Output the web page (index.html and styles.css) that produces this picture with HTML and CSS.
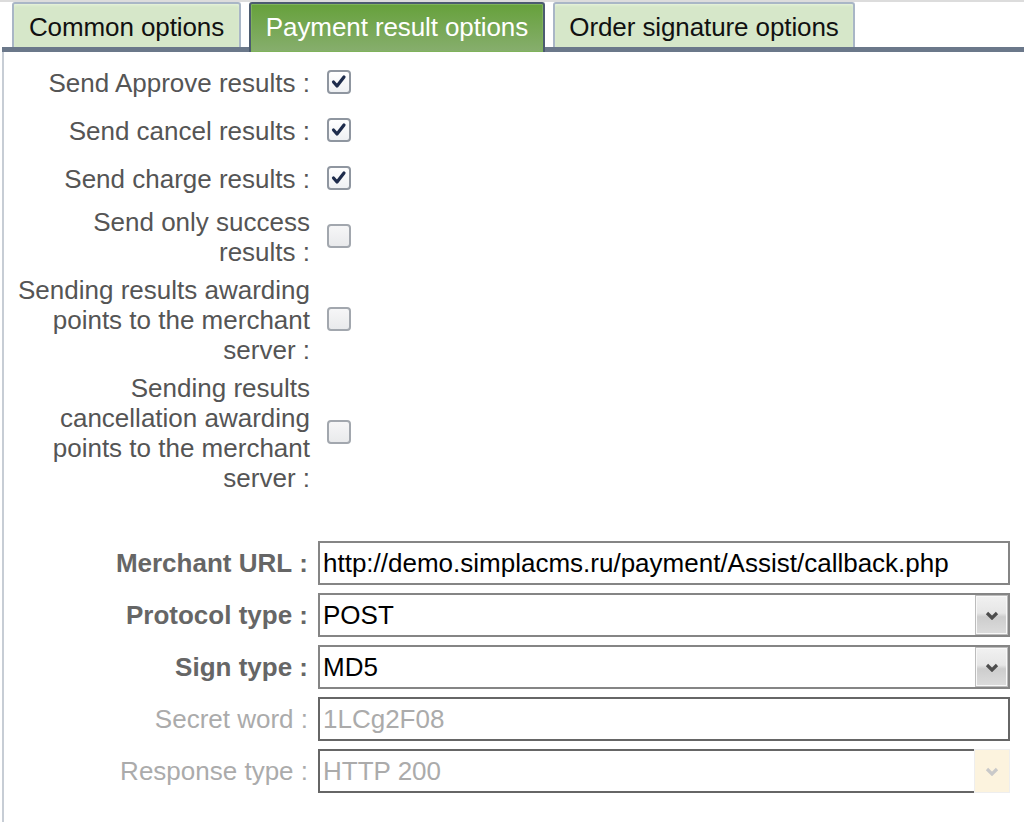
FILE: index.html
```html
<!DOCTYPE html>
<html>
<head>
<meta charset="utf-8">
<link rel="stylesheet" href="styles.css">
</head>
<body>
<div class="topline"></div>
<div class="panel">
  <div class="tabs">
    <div class="tab t-common">Common options</div>
    <div class="tab t-payment active">Payment result options</div>
    <div class="tab t-order">Order signature options</div>
  </div>
  <div class="content">
    <div class="checks">
      <div class="lbl">Send Approve results&nbsp;:</div>
      <span class="cb checked"><svg width="20" height="20" viewBox="0 0 20 20"><polyline points="4.5,10 8,14 15,5" fill="none" stroke="#1e2c4c" stroke-width="3.2" stroke-linecap="round" stroke-linejoin="round"/></svg></span>

      <div class="lbl">Send cancel results&nbsp;:</div>
      <span class="cb checked"><svg width="20" height="20" viewBox="0 0 20 20"><polyline points="4.5,10 8,14 15,5" fill="none" stroke="#1e2c4c" stroke-width="3.2" stroke-linecap="round" stroke-linejoin="round"/></svg></span>

      <div class="lbl">Send charge results&nbsp;:</div>
      <span class="cb checked"><svg width="20" height="20" viewBox="0 0 20 20"><polyline points="4.5,10 8,14 15,5" fill="none" stroke="#1e2c4c" stroke-width="3.2" stroke-linecap="round" stroke-linejoin="round"/></svg></span>

      <div class="lbl">Send only success results&nbsp;:</div>
      <span class="cb"></span>

      <div class="lbl">Sending results awarding points to the merchant server&nbsp;:</div>
      <span class="cb"></span>

      <div class="lbl">Sending results cancellation awarding points to the merchant server&nbsp;:</div>
      <span class="cb"></span>
    </div>

    <div class="fields">
      <div class="flbl bold">Merchant URL&nbsp;:</div>
      <div class="box"><span class="val">http://demo.simplacms.ru/payment/Assist/callback.php</span></div>

      <div class="flbl bold">Protocol type&nbsp;:</div>
      <div class="box select"><span class="val">POST</span><span class="arrow"><svg width="14" height="9" viewBox="0 0 14 9"><polyline points="2,2 7,7 12,2" fill="none" stroke="#4d4d4d" stroke-width="3.2"/></svg></span></div>

      <div class="flbl bold">Sign type&nbsp;:</div>
      <div class="box select"><span class="val">MD5</span><span class="arrow"><svg width="14" height="9" viewBox="0 0 14 9"><polyline points="2,2 7,7 12,2" fill="none" stroke="#4d4d4d" stroke-width="3.2"/></svg></span></div>

      <div class="flbl dis">Secret word&nbsp;:</div>
      <div class="box disabled"><span class="val">1LCg2F08</span></div>

      <div class="flbl dis">Response type&nbsp;:</div>
      <div class="box select disabled"><span class="val">HTTP 200</span><span class="arrow"><svg width="14" height="9" viewBox="0 0 14 9"><polyline points="2,2 7,7 12,2" fill="none" stroke="#c9c9c9" stroke-width="3.2"/></svg></span></div>
    </div>
  </div>
</div>
</body>
</html>
```

FILE: styles.css
```css
html, body {
  margin: 0;
  padding: 0;
  background: #fff;
}
body {
  font-family: "Liberation Sans", Arial, sans-serif;
  font-size: 26px;
  line-height: 30px;
  width: 1024px;
  height: 822px;
  overflow: hidden;
}
.topline {
  height: 2px;
  background: #dcdcdc;
}
.panel {
  margin-left: 2px;
}
.tabs {
  display: flex;
  align-items: flex-start;
  gap: 8px;
  height: 45px;
  padding-left: 10px;
  border-bottom: 5px solid #6b788a;
}
.tab {
  flex: none;
  box-sizing: border-box;
  padding: 8px 0 5px;
  border: 2px solid #a9b6c6;
  border-bottom: none;
  border-radius: 3px 3px 0 0;
  background: #d6e7c9;
  box-shadow: inset 0 2px 3px -1px #e9f4de;
  color: #111;
  text-align: center;
  white-space: nowrap;
  letter-spacing: -0.1px;
}
.t-common { width: 229px; }
.t-payment { width: 296px; }
.t-order { width: 302px; }
.tab.active {
  padding-bottom: 10px;
  border-color: #4c5b70;
  background: linear-gradient(#66a13b, #87ae6e);
  box-shadow: inset 0 0 0 1px #7fb35b;
  color: #fff;
}
.content {
  border-left: 2px solid #c7cdd5;
  height: 770px;
  padding-top: 6px;
  box-sizing: border-box;
}
.checks {
  display: grid;
  grid-template-columns: 296px 24px;
  column-gap: 17px;
  margin-left: 10px;
  align-items: center;
}
.lbl {
  padding: 5px 0 3px;
  text-align: right;
  color: #555;
}
.cb {
  display: flex;
  align-items: center;
  justify-content: center;
  width: 24px;
  height: 24px;
  box-sizing: border-box;
  margin: 12px 0;
  border: 2px solid #a2a7ae;
  border-radius: 4px;
  background: linear-gradient(#f6f6f7, #e9eaec);
}
.cb.checked {
  border-color: #8f96a0;
  background: linear-gradient(#ffffff, #eef0f3);
}
.fields {
  display: grid;
  grid-template-columns: 294px 692px;
  column-gap: 10px;
  row-gap: 8px;
  margin-left: 10px;
  margin-top: 45px;
  align-items: center;
}
.flbl {
  text-align: right;
  color: #666;
}
.flbl.bold {
  font-weight: bold;
}
.flbl.dis {
  color: #ababab;
}
.box {
  display: flex;
  align-items: stretch;
  height: 44px;
  box-sizing: border-box;
  border: 2px solid #858585;
  background: #fff;
  color: #000;
}
.box .val {
  flex: 1;
  padding-left: 3px;
  line-height: 40px;
  white-space: nowrap;
  overflow: hidden;
}
.box.disabled {
  border-color: #666;
}
.box.disabled .val {
  color: #ababab;
}
.arrow {
  flex: none;
  display: flex;
  align-items: center;
  justify-content: center;
  width: 33px;
  box-sizing: border-box;
  border: 1px solid #bcbcbc;
  background: linear-gradient(#f1f1f1 0%, #e6e6e6 45%, #cdcdcd 55%, #dcdcdc 100%);
  box-shadow: inset 0 0 0 1px #f8f8f8;
}
.box.disabled .arrow {
  width: 36px;
  margin: -2px -2px -2px 0;
  border: 1px solid #eeeeee;
  background: #fcf3de;
  box-shadow: none;
}
```
